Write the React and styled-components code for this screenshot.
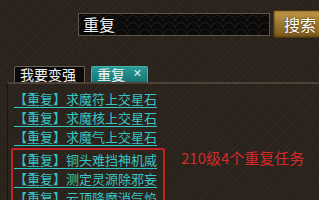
import React from 'react';
import styled, { createGlobalStyle } from 'styled-components';

const Global = createGlobalStyle`
  html, body {
    margin: 0;
    padding: 0;
    background: #2a231c;
  }
`;

const Page = styled.div`
  width: 319px;
  height: 200px;
  overflow: hidden;
  font-family: "Noto Sans CJK SC", "Liberation Sans", sans-serif;
  background-color: #2b241d;
  background-image:
    repeating-linear-gradient(45deg, rgba(0,0,0,0.08) 0 1px, transparent 1px 3px),
    repeating-linear-gradient(-45deg, rgba(255,255,255,0.025) 0 1px, transparent 1px 4px);
`;

const SearchRow = styled.div`
  display: flex;
  align-items: center;
  padding: 10px 0 0 78px;
  gap: 3px;
`;

const SearchBox = styled.div`
  flex-shrink: 0;
  width: 186px;
  height: 21px;
  border: 1px solid #5f554b;
  background-color: #0b0a09;
  background-image:
    radial-gradient(circle at 50% 100%, transparent 5px, #1d1c1b 5px, #1d1c1b 6px, transparent 6px);
  background-size: 12px 7px;
  display: flex;
  align-items: center;
  padding-left: 4px;
  color: #f2f2f2;
  font-size: 16px;
  text-shadow: 0 0 2px #000;
`;

const SearchButton = styled.div`
  flex-shrink: 0;
  width: 50px;
  height: 26px;
  border: 1px solid #4a3512;
  border-radius: 2px;
  background: linear-gradient(#c29a48 0%, #a07a30 45%, #7e5a1c 100%);
  box-shadow: inset 0 0 3px rgba(0,0,0,0.5);
  color: #fff;
  font-size: 16px;
  display: flex;
  align-items: center;
  padding-left: 10px;
  text-shadow: 0 0 2px #3a2608;
`;

const TabRow = styled.div`
  display: flex;
  align-items: flex-end;
  gap: 6px;
  padding-left: 14px;
  margin-top: 28px;
`;

const Tab = styled.div`
  position: relative;
  height: 16px;
  width: ${p => p.$w}px;
  box-sizing: border-box;
  border: 1px solid ${p => (p.$active ? '#3fb0ae' : '#6a6058')};
  border-bottom: none;
  border-radius: 2px 2px 0 0;
  background: ${p => (p.$active ? 'linear-gradient(#2a9a98, #157674)' : '#0c0a08')};
  color: #f4f4f4;
  font-size: 14px;
  line-height: 15px;
  padding-left: 5px;
`;

const Close = styled.span`
  position: absolute;
  right: 5px;
  top: -1px;
  font-size: 11px;
  color: #d8f0f0;
  font-family: "DejaVu Sans", sans-serif;
`;

const Panel = styled.div`
  margin-left: 7px;
  border-top: 2px solid #4d4238;
  border-left: 1px solid #171310;
  padding: 5px 0 0 3px;
`;

const Row = styled.div`
  font-size: 13px;
  line-height: 19px;
  height: 19px;
  padding-left: ${p => p.$pad || 3}px;
  color: #35c6c6;
  text-decoration: underline;
  text-underline-offset: 3px;
  white-space: nowrap;
`;

const Highlight = styled.div`
  display: flex;
  align-items: flex-start;
  margin-top: 2px;
`;

const RedBox = styled.div`
  width: 150px;
  border: 2px solid #c42222;
  border-radius: 2px;
`;

const Note = styled.div`
  margin-left: 16px;
  font-size: 15px;
  line-height: 20px;
  color: #d42a2a;
  white-space: nowrap;
`;

const plain = ['求魔符上交星石', '求魔核上交星石', '求魔气上交星石'];
const boxed = ['铜头难挡神机威', '测定灵源除邪妄', '云顶降魔消气焰'];

export default function App() {
  return (
    <Page>
      <Global />
      <SearchRow>
        <SearchBox>重复</SearchBox>
        <SearchButton>搜索</SearchButton>
      </SearchRow>
      <TabRow>
        <Tab $w={71}>我要变强</Tab>
        <Tab $w={57} $active>
          重复
          <Close>✕</Close>
        </Tab>
      </TabRow>
      <Panel>
        {plain.map(t => (
          <Row key={t}>【重复】{t}</Row>
        ))}
        <Highlight>
          <RedBox>
            {boxed.map(t => (
              <Row key={t} $pad={1}>【重复】{t}</Row>
            ))}
          </RedBox>
          <Note>210级4个重复任务</Note>
        </Highlight>
      </Panel>
    </Page>
  );
}
